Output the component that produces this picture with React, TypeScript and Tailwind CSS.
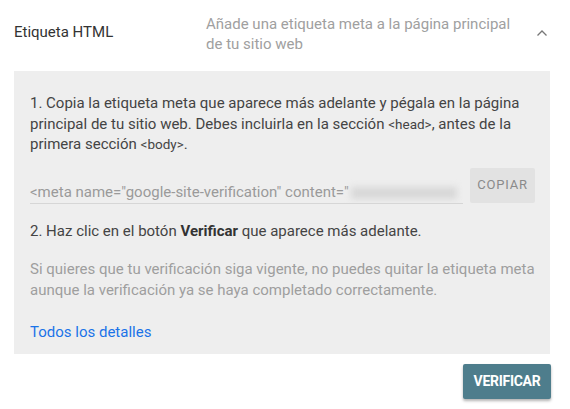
import React from "react";

export default function App() {
  return (
    <div
      className="w-[570px] h-[409px] bg-white overflow-hidden"
      style={{ fontFamily: "Roboto, 'Liberation Sans', sans-serif" }}
    >
      <div className="flex items-start pl-[14px] pt-[14px] h-[71px]">
        <div className="w-[192px] pt-[8px] text-[15px] leading-[20px] text-[#333]">Etiqueta HTML</div>
        <div className="w-[312px] text-[15px] leading-[20px] text-[#a0a0a0]">
          Añade una etiqueta meta a la página principal de tu sitio web
        </div>
        <div className="ml-[18px] pt-[15px]">
          <svg width="12" height="8" viewBox="0 0 12 8">
            <path d="M1.5 6.5 L6 2 L10.5 6.5" fill="none" stroke="#777" strokeWidth="1.3" />
          </svg>
        </div>
      </div>

      <div className="ml-[14px] w-[536px] bg-[#eeeeee] pl-[16px] pr-[14px] pt-[22px] pb-[11px] text-[15px] leading-[20.5px] text-[#444]">
        <p>
          1. Copia la etiqueta meta que aparece más adelante y pégala en la página principal de tu sitio web. Debes incluirla en la sección{" "}
          <span className="text-[13.5px] leading-none">&lt;head&gt;</span>, antes de la primera sección{" "}
          <span className="text-[13.5px] leading-none">&lt;body&gt;</span>.
        </p>

        <div className="flex items-start mt-[13px]">
          <div className="w-[433px] flex items-end h-[36px] border-b border-[#d6d6d6] pb-[1px] overflow-hidden whitespace-nowrap">
            <span className="text-[15px] text-[#9a9a9a] leading-[20px]">
              &lt;meta name="google-site-verification" content="
            </span>
            <span className="ml-[2px] mb-[3px] inline-block w-[106px] h-[12px] bg-[#d8d8d8] blur-[3px]"></span>
          </div>
          <div className="ml-[7px] w-[65px] h-[35px] bg-[#e2e2e2] rounded-[2px] flex items-center justify-center text-[13px] tracking-[0.06em] text-[#8a8a8a]">
            COPIAR
          </div>
        </div>

        <p className="mt-[17px]">
          2. Haz clic en el botón <b className="font-bold text-[#333]">Verificar</b> que aparece más adelante.
        </p>

        <p className="mt-[18px] text-[#9e9e9e]">
          Si quieres que tu verificación siga vigente, no puedes quitar la etiqueta meta aunque la verificación ya se haya completado correctamente.
        </p>

        <p className="mt-[21px] text-[#1a73e8] text-[15px] leading-[22px]">Todos los detalles</p>
      </div>

      <div className="flex justify-end w-[551px] mt-[10px]">
        <div className="w-[88px] h-[35px] bg-[#4e7d8c] rounded-[2px] shadow-[0_2px_3px_rgba(0,0,0,0.3)] flex items-center justify-center text-white font-bold text-[14px] tracking-[-0.02em]">
          VERIFICAR
        </div>
      </div>
    </div>
  );
}
